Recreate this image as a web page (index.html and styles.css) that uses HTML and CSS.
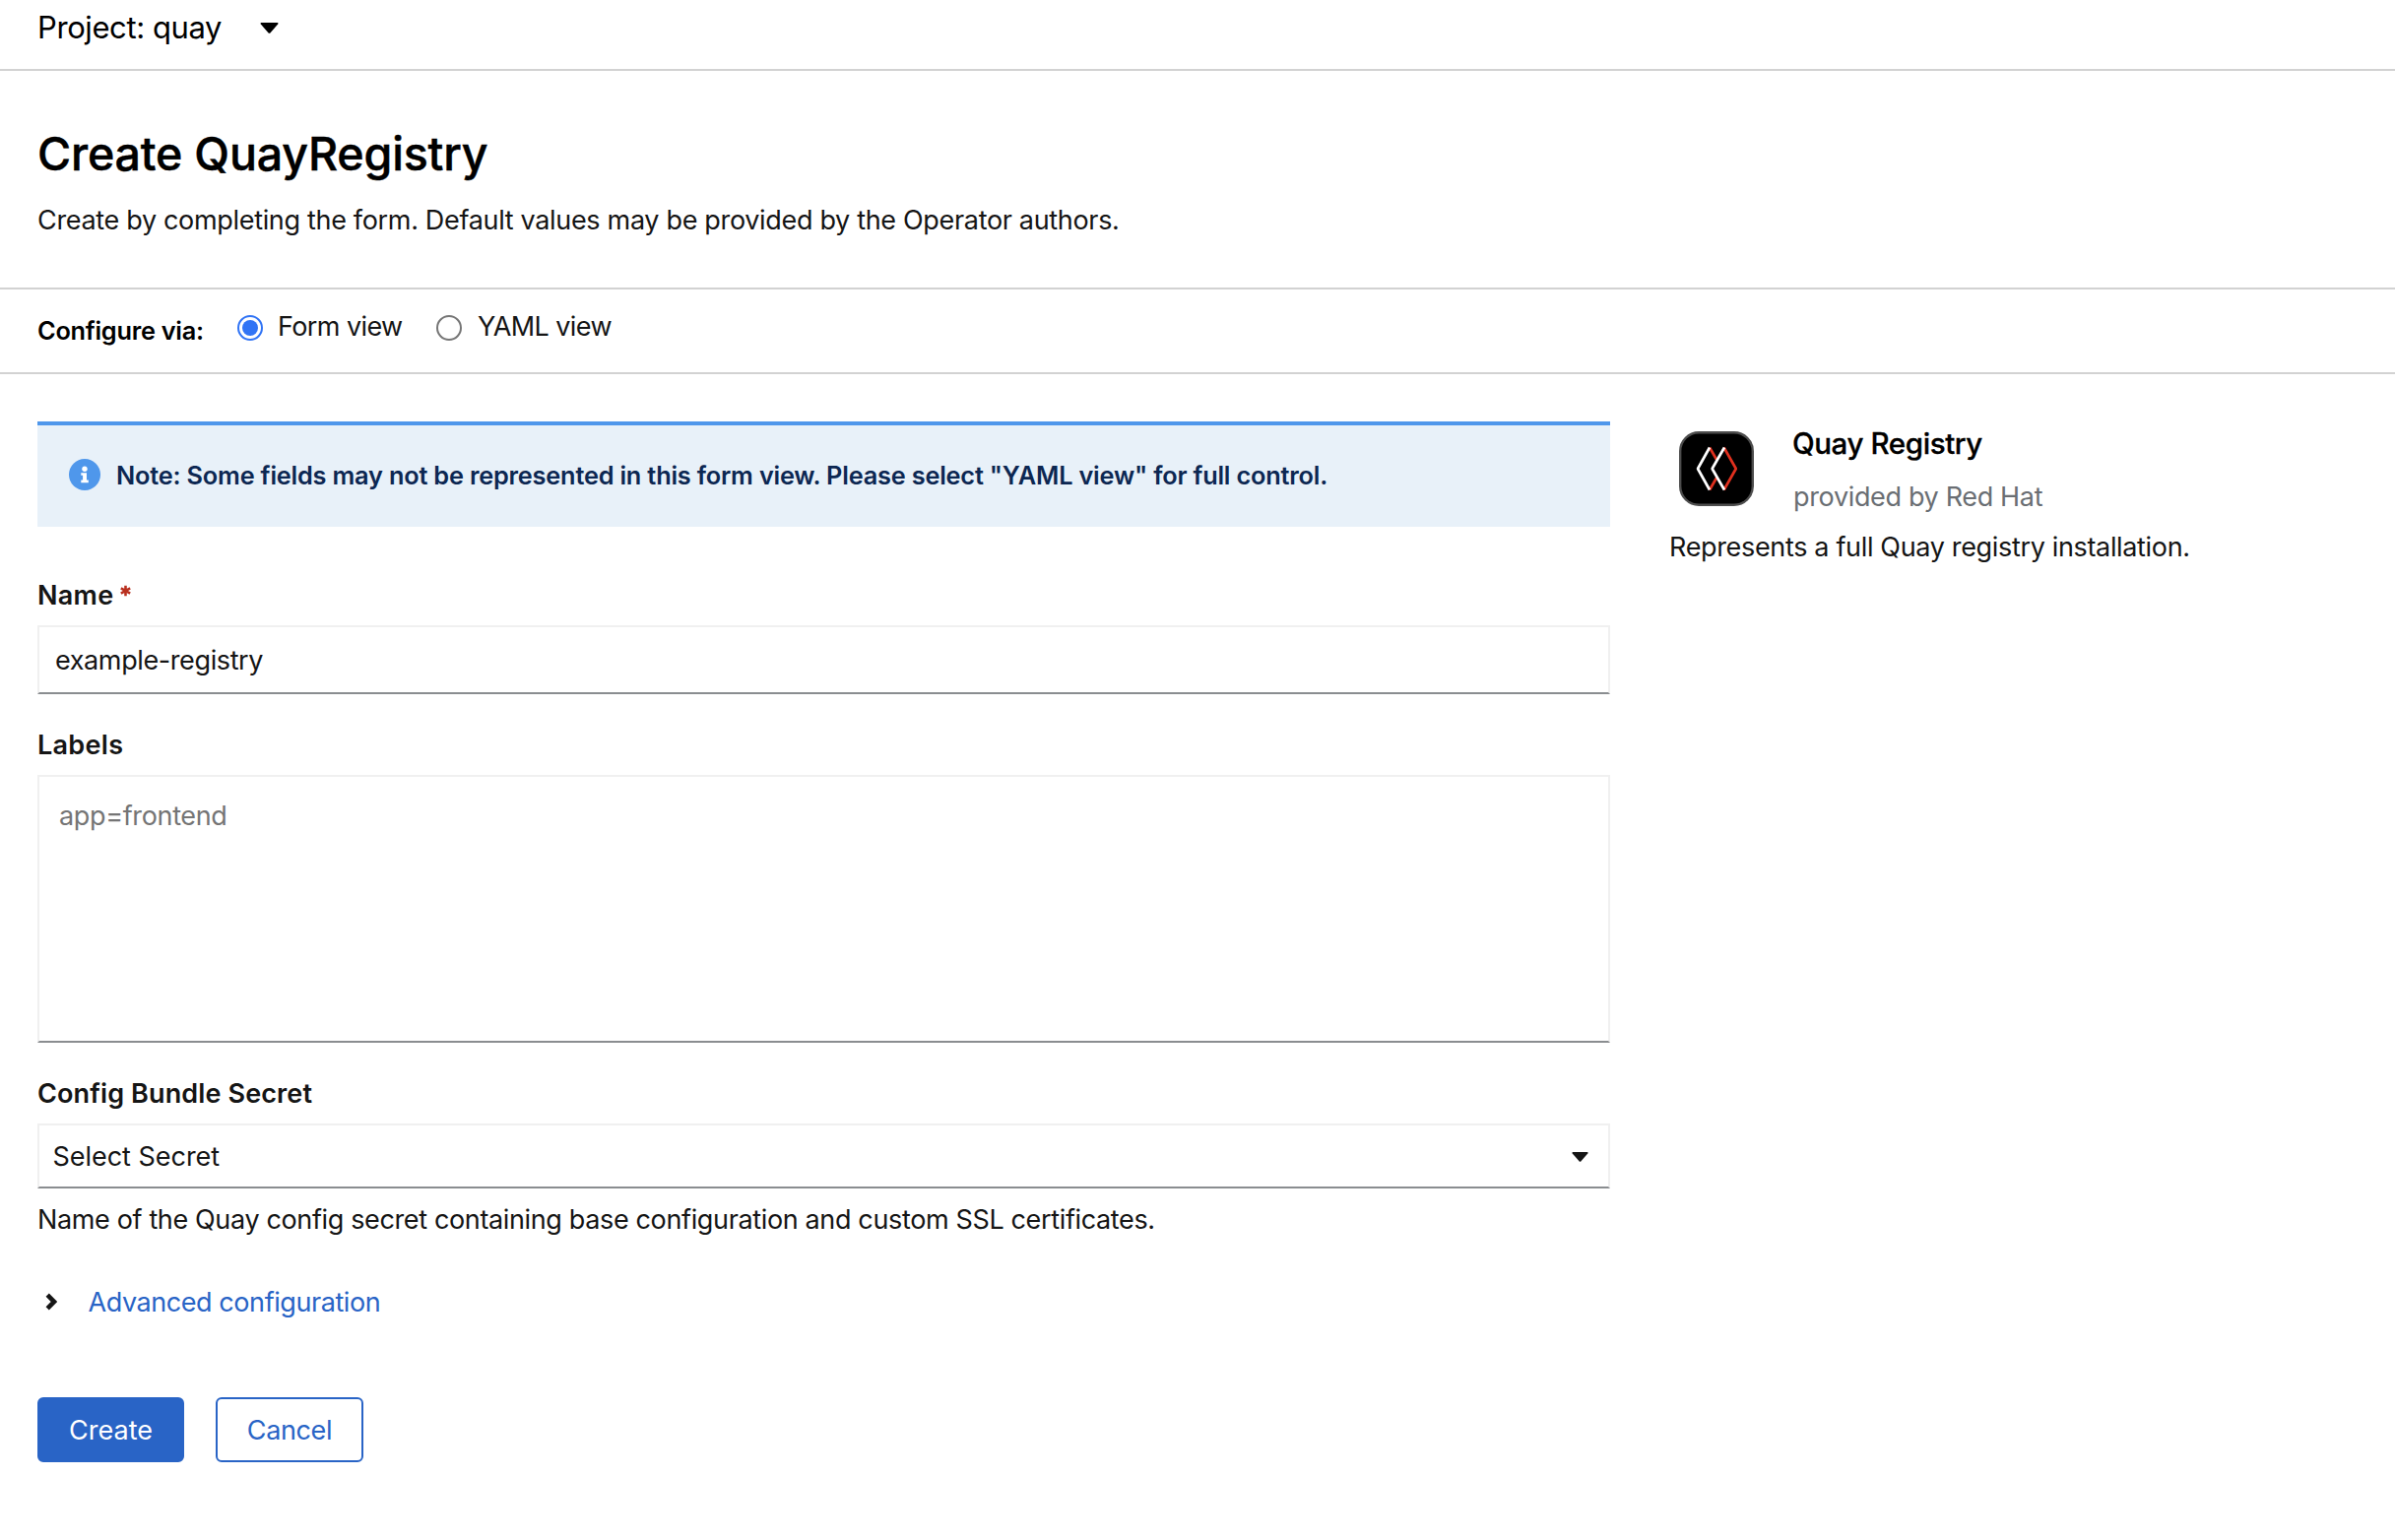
FILE: index.html
```html
<!DOCTYPE html>
<html lang="en">
<head>
<meta charset="utf-8">
<title>Create QuayRegistry</title>
<link rel="stylesheet" href="styles.css">
</head>
<body>
<nav class="project-bar">
  <span class="project-name">Project: quay</span>
  <svg class="caret project-caret" viewBox="0 0 19 11"><path d="M1.4 0H17.6Q19 .3 18.2 1.6L10.6 10.2Q9.5 11.4 8.4 10.2L.8 1.6Q0 .3 1.4 0Z"/></svg>
</nav>
<header class="page-header">
  <h1 class="title">Create QuayRegistry</h1>
  <p class="description">Create by completing the form. Default values may be provided by the Operator authors.</p>
</header>
<div class="view-switch">
  <span class="switch-label">Configure via:</span>
  <label class="option"><input class="radio" type="radio" name="view" checked><span class="option-text form-text">Form view</span></label>
  <label class="option"><input class="radio" type="radio" name="view"><span class="option-text yaml-text">YAML view</span></label>
</div>
<main class="content">
  <form class="form">
    <div class="alert">
      <svg class="alert-icon" viewBox="0 0 32 32"><circle cx="16" cy="16" r="16" fill="#4f97eb"/><circle cx="16" cy="10.2" r="2.7" fill="#fff"/><path d="M12.3 14.2H18V21.6H19.8V24.2H12.3V21.6H14.1V16.8H12.3Z" fill="#fff"/></svg>
      <span class="alert-text">Note: Some fields may not be represented in this form view. Please select "YAML view" for full control.</span>
    </div>
    <div class="field first">
      <label class="field-label name-label" for="name">Name <svg class="required" viewBox="0 0 12 12"><path d="M6 .2V11.8M.9 3.1L11.1 8.9M11.1 3.1L.9 8.9"/></svg></label>
      <input class="control text-input" id="name" type="text" value="example-registry">
    </div>
    <div class="field">
      <label class="field-label labels-label" for="labels">Labels</label>
      <textarea class="control text-area" id="labels" placeholder="app=frontend"></textarea>
    </div>
    <div class="field">
      <span class="field-label secret-label">Config Bundle Secret</span>
      <button class="control select" type="button"><span>Select Secret</span><svg class="caret select-caret" viewBox="0 0 19 11"><path d="M1.4 0H17.6Q19 .3 18.2 1.6L10.6 10.2Q9.5 11.4 8.4 10.2L.8 1.6Q0 .3 1.4 0Z"/></svg></button>
      <p class="help">Name of the Quay config secret containing base configuration and custom SSL certificates.</p>
    </div>
    <div class="advanced">
      <svg class="chevron" viewBox="0 0 12 18"><path d="M2.2 2.2L9 9L2.2 15.8"/></svg>
      <a class="advanced-link">Advanced configuration</a>
    </div>
    <div class="actions">
      <button class="button primary" type="button">Create</button>
      <button class="button secondary" type="button">Cancel</button>
    </div>
  </form>
  <aside class="operator">
    <div class="operator-head">
      <svg class="logo" viewBox="0 0 76 76">
        <rect x="1.2" y="1.2" width="73.6" height="73.6" rx="19" fill="#000" stroke="#4d4d4d" stroke-width="2.4"/>
        <g fill="none" stroke-width="2.7" stroke-linejoin="bevel">
          <path d="M31 16.5L43.5 38L31 59.5" stroke="#e0301e"/>
          <path d="M31 16.5L19 38L31 59.5" stroke="#fff"/>
          <path d="M46 18L34 38L46 58L58 38Z" fill="#000" stroke="none"/>
          <path d="M45.6 16.5L57.8 38L45.6 59.5" stroke="#e0301e"/>
          <path d="M46 16.5L33.6 38L46 59.5" stroke="#fff"/>
        </g>
      </svg>
      <div class="operator-names">
        <h2 class="operator-title">Quay Registry</h2>
        <p class="provider">provided by Red Hat</p>
      </div>
    </div>
    <p class="operator-text">Represents a full Quay registry installation.</p>
  </aside>
</main>
</body>
</html>
```
FILE: styles.css
```css
* { box-sizing: border-box; }

body {
  margin: 0;
  background: #fff;
  color: #151515;
  font: 400 27px/40px Inter, "Liberation Sans", sans-serif;
  white-space: nowrap;
}

h1, h2, p { margin: 0; }

.caret { display: block; fill: #151515; }

/* Project selector */
.project-bar {
  display: flex;
  height: 72px;
  padding: 8px 38px 0;
  border-bottom: 2px solid #d2d2d2;
}
.project-name { width: 226px; color: #000; font-size: 31px; letter-spacing: -0.407px; }
.project-caret { width: 19px; height: 11px; margin-top: 15px; fill: #000; }

/* Page heading */
.page-header {
  height: 222px;
  padding: 54px 38px 0;
  border-bottom: 2px solid #d2d2d2;
}
.title { color: #000; font-size: 46.5px; font-weight: 500; line-height: 60px; letter-spacing: -0.16px; -webkit-text-stroke: 0.5px #000; }
.description { margin-top: 18px; letter-spacing: -0.326px; }

/* Form / YAML switch */
.view-switch {
  display: flex;
  align-items: flex-start;
  height: 86px;
  padding: 18px 38px 0;
  border-bottom: 2px solid #d2d2d2;
}
.switch-label { width: 203px; margin-top: 4px; color: #000; font-size: 25.3px; font-weight: 600; letter-spacing: -0.25px; }
.option { display: flex; width: 202px; }
.radio {
  display: grid;
  place-content: center;
  appearance: none;
  width: 26px;
  height: 26px;
  margin: 8px 15px 0 0;
  border: 2px solid #767676;
  border-radius: 50%;
}
.radio:checked { border-color: #3174f5; }
.radio:checked::before { content: ""; width: 16px; height: 16px; border-radius: 50%; background: #3174f5; }
.form-text { letter-spacing: -0.6px; }
.yaml-text { margin-left: 1px; letter-spacing: -0.6px; }

/* Two-column content */
.content { display: flex; gap: 58px; padding: 48px 38px 0; }
.form { width: 1597px; }

.alert {
  display: flex;
  height: 107px;
  padding: 0 32px;
  border-top: 4px solid #4f97eb;
  background: #e8f1f9;
}
.alert-icon { width: 32px; height: 32px; margin: 34px 16px 0 0; }
.alert-text { margin-top: 31px; color: #0c2752; font-size: 25.3px; font-weight: 600; letter-spacing: -0.188px; }

.field { margin-top: 32px; }
.field.first { margin-top: 50px; }
.field-label { display: block; margin-bottom: 10px; font-weight: 600; }
.name-label { display: flex; gap: 7px; letter-spacing: 0.3px; }
.labels-label { letter-spacing: 0.3px; }
.secret-label { letter-spacing: 0.12px; }
.required { width: 11px; height: 12px; margin-top: 8.5px; fill: none; stroke: #b9301f; stroke-width: 2.8; }

.control {
  display: block;
  width: 100%;
  margin: 0;
  border: 2px solid #f0f0f0;
  border-bottom-color: #8a8d90;
  border-radius: 0;
  outline: 0;
  background: #fff;
  color: #151515;
  font: inherit;
}
.text-input { height: 70px; padding: 0 16px; letter-spacing: -0.39px; }
.text-area { height: 272px; padding: 20px; resize: none; letter-spacing: -0.35px; }
.text-area::placeholder { color: #757575; }
.select { display: flex; align-items: center; justify-content: space-between; height: 66px; padding: 2px 20px 0 13.5px; letter-spacing: -0.03px; }
.select-caret { width: 17px; height: 10px; }
.help { margin-top: 12px; letter-spacing: -0.36px; }

.advanced { display: flex; gap: 31.5px; margin-top: 44px; padding-left: 8px; }
.chevron { width: 12px; height: 18px; margin-top: 10px; fill: none; stroke: #151515; stroke-width: 4.6; stroke-linecap: butt; }
.advanced-link { color: #2964c6; letter-spacing: -0.43px; }

.actions { display: flex; gap: 32px; margin-top: 76px; }
.button { height: 66px; padding: 2px 0 0; border: 2px solid #2964c6; border-radius: 6px; font: inherit; }
.primary { width: 149px; background: #2964c6; color: #fff; }
.secondary { width: 150px; background: #fff; color: #2964c6; letter-spacing: -0.38px; }

/* Operator summary */
.operator-head { display: flex; gap: 39px; padding-left: 12px; }
.logo { width: 76px; height: 76px; margin-top: 10px; }
.operator-names { margin-top: 2px; }
.operator-title { color: #000; font-size: 29.5px; font-weight: 500; line-height: 40px; letter-spacing: -0.4px; -webkit-text-stroke: 0.3px #000; }
.provider { margin: 15px 0 0 1px; color: #6a6e73; letter-spacing: -0.345px; }
.operator-text { margin: 11px 0 0 2px; letter-spacing: -0.34px; }
```
